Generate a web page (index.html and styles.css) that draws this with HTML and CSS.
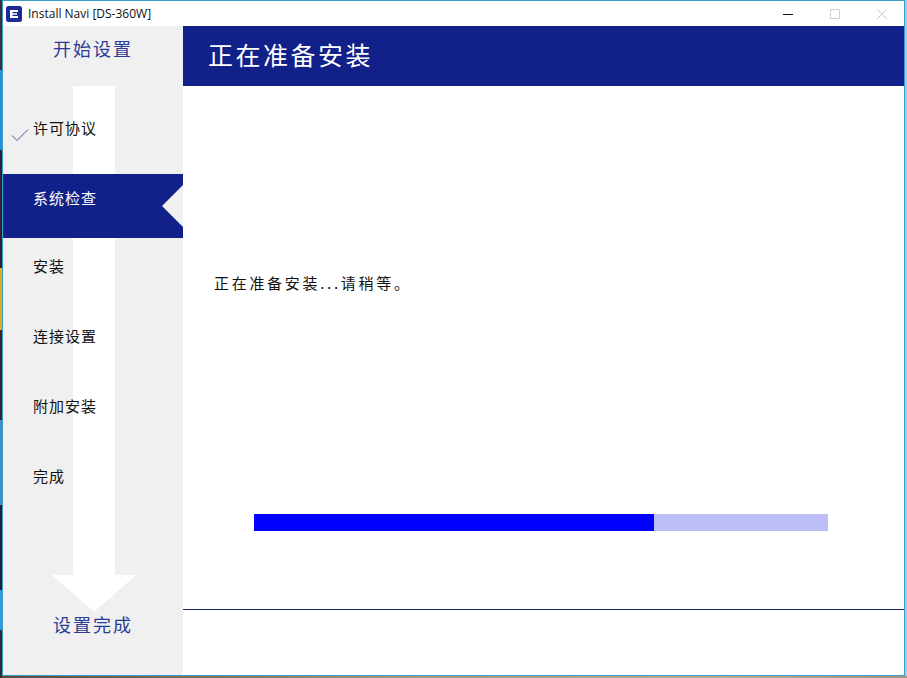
FILE: index.html
```html
<!DOCTYPE html>
<html lang="zh-CN">
<head>
    <meta charset="UTF-8">
    <meta name="viewport" content="width=device-width, initial-scale=1.0">
    <title>Install Navi [DS-360W]</title>
    <link rel="stylesheet" href="styles.css">
</head>
<body>
    <div class="window">
        <div class="title-bar">
            <svg class="app-icon" width="16" height="16" viewBox="0 0 16 16">
                <rect width="16" height="16" rx="2.5" fill="#1b2a94"/>
                <path d="M4 4h8v2H6.5v1.2H11v1.6H6.5V10H12v2H4z" fill="#fff"/>
            </svg>
            <span class="app-name">Install Navi [DS-360W]</span>
            <div class="win-controls">
                <svg width="10" height="10" viewBox="0 0 10 10"><path d="M0 5.5h10" stroke="#111" fill="none"/></svg>
                <svg width="10" height="10" viewBox="0 0 10 10"><path d="M.5.5h9v9h-9z" stroke="#ccc" fill="none"/></svg>
                <svg width="10" height="10" viewBox="0 0 10 10"><path d="M0 0l10 10M10 0L0 10" stroke="#ccc" fill="none"/></svg>
            </div>
        </div>
        <div class="app-body">
            <aside class="sidebar">
                <svg class="flow-arrow" width="84" height="527" viewBox="0 0 84 527">
                    <path d="M21 0h42v489h21l-42 37-42-37h21z" fill="#fff"/>
                </svg>
                <div class="side-title">开始设置</div>
                <ul class="steps">
                    <li class="step done">
                        <svg class="check" width="18" height="14" viewBox="0 0 18 14"><path d="M1 7.500l5 5L17 1.500" stroke="#4a5a9e" fill="none"/></svg>
                        许可协议
                    </li>
                    <li class="step active">系统检查</li>
                    <li class="step">安装</li>
                    <li class="step">连接设置</li>
                    <li class="step">附加安装</li>
                    <li class="step">完成</li>
                </ul>
                <div class="side-title side-end">设置完成</div>
            </aside>
            <main class="main">
                <header class="main-header">正在准备安装</header>
                <p class="message">正在准备安装...请稍等。</p>
                <div class="progress"><div class="progress-fill" style="width: 69.7%"></div></div>
                <div class="main-footer"></div>
            </main>
        </div>
    </div>
</body>
</html>
```

FILE: styles.css
```css
html, body {
    height: 100%;
}

body {
    margin: 0;
    overflow: hidden;
    font-family: "Noto Sans CJK SC", "Noto Sans", sans-serif;
    background:
        linear-gradient(to bottom, #3b2f38 0, #3b2f38 70px, #2490dc 70px, #2490dc 150px, #2b2430 150px, #2b2430 268px, #e0ac28 268px, #e0ac28 330px, #33262c 330px, #33262c 420px, #3f8ec4 420px, #3f8ec4 505px, #241f33 505px, #241f33 590px, #2f9ad8 590px, #2f9ad8 630px, #33282c 630px) left top / 2px 100% no-repeat,
        linear-gradient(to right, #5a4a3c, #a89a80 45%, #b8ac96 80%, #a09484) left bottom / 100% 2px no-repeat,
        #a9cdf2;
}

.window {
    box-sizing: border-box;
    width: 903px;
    height: 676px;
    margin-left: 2px;
    border: 1px solid #3a9cc8;
    background: #fff;
    display: flex;
    flex-direction: column;
}

.title-bar {
    height: 25px;
    flex: none;
    display: flex;
    align-items: center;
    padding-left: 3px;
    font-family: "Open Sans", "Noto Sans", sans-serif;
    font-size: 12px;
    color: #111;
}

.app-icon {
    margin-right: 6px;
}

.win-controls {
    margin-left: auto;
    margin-right: 17px;
    display: flex;
    gap: 37px;
}

.app-body {
    flex: 1;
    display: flex;
    min-height: 0;
}

.sidebar {
    width: 180px;
    flex: none;
    background: #f0f0f0;
    position: relative;
    display: flex;
    flex-direction: column;
}

.flow-arrow {
    position: absolute;
    left: 49px;
    top: 60px;
}

.side-title {
    position: relative;
    height: 44px;
    line-height: 44px;
    text-align: center;
    font-size: 18px;
    letter-spacing: 2px;
    color: #2b3a94;
}

.side-end {
    margin-top: auto;
    margin-bottom: 29px;
}

.steps {
    position: relative;
    list-style: none;
    margin: 34px 0 0;
    padding: 0;
}

.step {
    position: relative;
    height: 64px;
    margin-bottom: 6px;
    padding-left: 30px;
    padding-top: 13px;
    box-sizing: border-box;
    font-size: 15px;
    line-height: 22px;
    letter-spacing: 1px;
    color: #111;
}

.step.active {
    margin-bottom: 4px;
    background: #12218a;
    color: #fff;
    clip-path: polygon(0 0, 100% 0, 100% 11px, 159px 32px, 100% 53px, 100% 100%, 0 100%);
}

.check {
    position: absolute;
    left: 8px;
    top: 24px;
}

.main {
    flex: 1;
    display: flex;
    flex-direction: column;
    min-width: 0;
}

.main-header {
    height: 60px;
    flex: none;
    box-sizing: border-box;
    padding-left: 25px;
    background: #12218a;
    color: #fff;
    font-size: 25px;
    line-height: 56px;
    letter-spacing: 2.500px;
}

.message {
    margin: 185px 0 0 31px;
    font-size: 15px;
    line-height: 24px;
    letter-spacing: 2.700px;
    color: #111;
}

.progress {
    margin: 219px 0 0 71px;
    width: 574px;
    height: 17px;
    background: #bdbdf5;
}

.progress-fill {
    height: 100%;
    background: #0000ff;
}

.main-footer {
    margin-top: auto;
    height: 66px;
    box-sizing: border-box;
    border-top: 1px solid #1a2a60;
}
```
